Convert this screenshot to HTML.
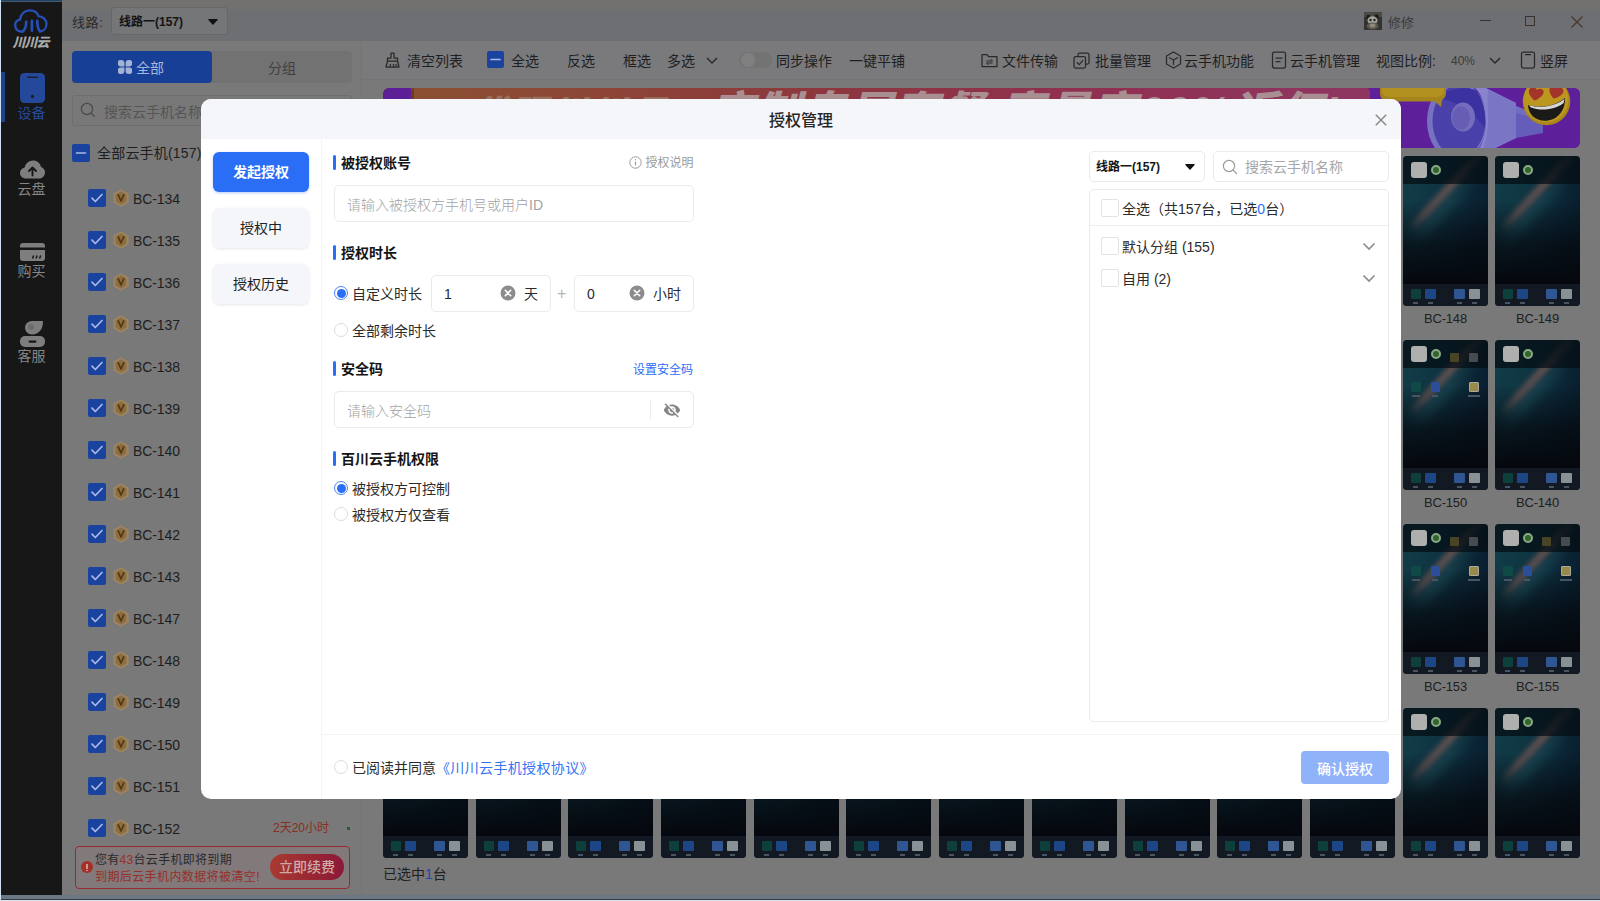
<!DOCTYPE html>
<html lang="zh-CN">
<head>
<meta charset="utf-8">
<title>授权管理</title>
<style>
*{box-sizing:border-box;margin:0;padding:0}
html,body{width:1600px;height:901px;overflow:hidden;background:#7f7f7f}
body{font-family:"Liberation Sans","Noto Sans CJK SC",sans-serif;font-size:14px;color:#222;position:relative}
.abs{position:absolute}
.t{position:absolute;white-space:nowrap;line-height:20px}
/* ---------- frame ---------- */
#frame-top{left:0;top:0;width:1600px;height:2px;background:#3f5b73}
#frame-top2{left:0;top:0;width:1600px;height:1px;background:#24425c}
#frame-left{left:0;top:0;width:1px;height:901px;background:#cfe0f0}
#frame-bot{left:0;top:900px;width:1600px;height:1px;background:#dde2e9}
#frame-bot2{left:1px;top:895px;width:1599px;height:5px;background:#6b7883;border-bottom:1px solid #2f3b48}
/* ---------- sidebar ---------- */
#side{left:1px;top:0;width:61px;height:898px;background:#171717}
#side .lab{position:absolute;left:0;width:61px;text-align:center;font-size:14px;line-height:18px;color:#878787}
/* ---------- topbar ---------- */
#topbar{z-index:2;left:62px;top:0;width:1538px;height:41px;background:linear-gradient(180deg,#73716f 0,#73716f 8px,#6d6f73 11px,#6d6f73 100%)}
/* ---------- left panel ---------- */
#lp{left:62px;top:40px;width:299px;height:858px;background:#797979}
#lp-div{left:361px;top:40px;width:1px;height:858px;background:#737373}
/* ---------- main ---------- */
#main{left:362px;top:40px;width:1238px;height:858px;background:#797979}
#toolbar{left:362px;top:40px;width:1238px;height:40px;background:#7a7a7c;border-bottom:1px solid #747474}
/* ---------- modal ---------- */
#modal{left:201px;top:99px;width:1200px;height:700px;background:#fff;border-radius:10px;overflow:hidden}
#mhead{left:0;top:0;width:1200px;height:40px;background:#f5f6fa}

/* topbar items */
#sel1{left:49px;top:7px;width:117px;height:28px;background:#757678;border:1px solid #66676a;border-radius:3px}
.cb{position:absolute;width:18px;height:18px;border-radius:2px;background:#1a43a0}
.cb svg{position:absolute;left:0;top:0}
.li{position:absolute;left:0;width:299px;height:42px}
.li .cb{left:26px;top:12px}
.li .v{position:absolute;left:50.500px;top:12px}
.li .n{position:absolute;left:71px;top:12px;font-size:14px;line-height:20px;color:#1e1e1e;letter-spacing:-.1px}

#toolbar .t{top:11px;font-size:14px;color:#1f1f1f}
.ph{position:absolute;width:85px;height:150px;border-radius:4px;overflow:hidden;background:
 linear-gradient(180deg,rgba(4,7,12,0) 0%,rgba(4,7,12,0) 30%,rgba(4,7,12,.7) 60%,#05080e 84%),
 linear-gradient(100deg,#123d49 0%,#0e3341 40%,#0a2232 75%,#081a28 100%)}
.ph i{position:absolute;display:block}
.ph .st{left:-10px;top:32px;width:104px;height:8px;background:linear-gradient(90deg,rgba(120,82,78,0),rgba(120,82,78,.6) 22%,rgba(130,92,86,.7) 60%,rgba(120,82,78,.2));transform:rotate(-47deg);filter:blur(2.500px)}
.ph .s2{left:-8px;top:42px;width:100px;height:14px;background:linear-gradient(90deg,rgba(40,90,100,0),rgba(40,90,100,.35) 30%,rgba(40,90,100,.35) 60%,rgba(40,90,100,0));transform:rotate(-47deg);filter:blur(4px)}
.ph .tb{left:0;top:0;width:85px;height:28px;background:rgba(5,12,18,.72)}
.ph .ck{left:8px;top:6px;width:16px;height:16px;border-radius:3px;background:#afafaf}
.ph .gr{left:28px;top:9px;width:10px;height:10px;border-radius:5px;background:#32652b;border:2px solid #8aa986}
.ph .dk{left:0;top:128px;width:85px;height:22px;background:#131923}
.ph .a{top:133px;width:10px;height:10px;border-radius:1px}
.ph .d{top:146px;width:5px;height:1.500px;background:#4a5562}
.pl{position:absolute;width:85px;text-align:center;font-size:13px;line-height:18px;color:#202020;letter-spacing:-.2px}

/* modal content (coords relative to modal: page x-201, y-99) */
#modal .t{color:#2b2b2b}
.nav{position:absolute;left:12px;width:96px;height:40px;border-radius:6px;background:#f5f6fa;box-shadow:0 1px 3px rgba(0,0,0,.10);text-align:center;font-size:14px;line-height:40px;color:#222}
.nav.on{background:#2b6ef6;color:#fff;font-weight:700;box-shadow:0 1px 3px rgba(43,110,246,.35)}
.sec{position:absolute;left:132px;height:20px}
.sec:before{content:"";position:absolute;left:0;top:2px;width:3px;height:15px;border-radius:1.500px;background:#2b6ef6}
.sec span{position:absolute;left:8px;top:0;white-space:nowrap;font-size:14px;line-height:20px;font-weight:700;color:#141414}
.inp{position:absolute;border:1px solid #e9eaed;border-radius:5px;background:#fff}
.ph13{position:absolute;white-space:nowrap;font-size:14px;line-height:20px;color:#a2a2a2;font-weight:300;margin-top:1px}
.rd{position:absolute;width:14px;height:14px;border-radius:7px;border:1px solid #dcdde1;background:#fff}
.rd.on{border:1px solid #4c83f7}
.rd.on:after{content:"";position:absolute;left:1.500px;top:1.500px;width:9px;height:9px;border-radius:4.500px;background:#2b6ef6}
.mcb{position:absolute;width:18px;height:18px;border:1px solid #e2e3e7;border-radius:2px;background:#fff}
</style>
</head>
<body>
<div class="abs" id="side">
<div class="abs" style="left:0;top:72px;width:4px;height:50px;background:#1f4288"></div>
<svg class="abs" style="left:12px;top:7px" width="37" height="27" viewBox="0 0 42 30" fill="none" stroke="#2450b8" stroke-width="2.6" stroke-linecap="round">
<path d="M10.5 27.5H8.5C4 27 2.5 23.5 2.5 20.5c0-3.5 2.5-6 5.5-6.500C8.500 8 13 3.500 19 3.500c4.500 0 8.500 2.500 10 6.500 5 .5 9 4 9 9 0 4.500-3 8-7.500 8.500"/>
<path d="M15 16.500c0 5-1 8.500-4 11M21.500 15.500v11M27.500 15.500c0 4 .5 8.500 3 11.500" stroke-width="3"/>
</svg>
<div class="t" style="left:-1px;top:35px;width:61px;text-align:center;font-size:13px;line-height:16px;font-weight:900;font-style:italic;color:#a9a9a9;letter-spacing:-1px">川川云</div>
<svg class="abs" style="left:19px;top:73px" width="25" height="30" viewBox="0 0 25 30"><rect x="0" y="0" width="25" height="30" rx="4.500" fill="#24489a"/><rect x="7" y="3.500" width="11" height="1.600" rx=".8" fill="#17202f"/><circle cx="12.500" cy="23.500" r="1.700" fill="#17202f"/></svg>
<div class="lab" style="top:104px;color:#264a9c">设备</div>
<svg class="abs" style="left:19px;top:160px" width="25" height="19" viewBox="0 0 25 19"><path d="M6 18.500C2.500 18.500 0 16 0 13c0-2.700 2-5 4.700-5.400C5.500 3.500 9 .5 13 .5c4 0 7.200 2.700 8 6.400 2.300.6 4 2.700 4 5.300 0 3.500-2.600 6.300-6 6.300z" fill="#7e7e7e"/><path d="M12.500 15.500V8M9 11l3.500-3.500L16 11" stroke="#171717" stroke-width="1.900" fill="none" stroke-linecap="round" stroke-linejoin="round"/></svg>
<div class="lab" style="top:180px">云盘</div>
<svg class="abs" style="left:19px;top:243px" width="25" height="18" viewBox="0 0 25 18"><path d="M3 0h19a3 3 0 0 1 3 3v1.500H0V3a3 3 0 0 1 3-3z" fill="#7e7e7e"/><path d="M0 7h25v8a3 3 0 0 1-3 3H3a3 3 0 0 1-3-3z" fill="#7e7e7e"/><path d="M12.500 15.500l1.200-3M16 15.500l1.200-3M19.500 15.500l1.200-3" stroke="#171717" stroke-width="1.500"/></svg>
<div class="lab" style="top:262px">购买</div>
<svg class="abs" style="left:19px;top:321px" width="25" height="26" viewBox="0 0 25 26"><path d="M12 0h10.500c0 0 .5 0 .5 .5C23 8 19 13.500 12 13.500 8 13.500 5 10.500 5 6.800 5 3 8 0 12 0z" fill="#7e7e7e"/><circle cx="11" cy="6" r="3" fill="#6c6c6c"/><path d="M5 15h15a5 5 0 0 1 5 5v1a5 5 0 0 1-5 5H5a5 5 0 0 1-5-5v-1a5 5 0 0 1 5-5z" fill="#7e7e7e"/><rect x="8.500" y="19.500" width="8" height="2.200" rx="1.100" fill="#171717"/></svg>
<div class="lab" style="top:347px">客服</div>
</div>
<div class="abs" id="topbar">
<div class="t" style="left:10px;top:12px;font-size:13px;letter-spacing:.6px;color:#2a2a2a;margin-top:1px">线路:</div>
<div class="abs" id="sel1"><div class="t" style="left:7px;top:4px;font-size:12px;font-weight:700;color:#141414">线路一(157)</div>
<svg class="abs" style="left:96px;top:11px" width="10" height="6" viewBox="0 0 10 6"><path d="M.8 0h8.400a.6.600 0 0 1 .4 1L5.500 5.600a.7.700 0 0 1-1 0L.4 1a.6.600 0 0 1 .4-1z" fill="#111"/></svg></div>
<svg class="abs" style="left:1302px;top:12px" width="18" height="18" viewBox="0 0 18 18"><rect width="18" height="18" fill="#34332f"/><rect x="0" y="0" width="18" height="5" fill="#4a4a44"/><circle cx="4.500" cy="5" r="2.200" fill="#1c1c1a"/><circle cx="12.500" cy="4.500" r="2.200" fill="#1c1c1a"/><ellipse cx="8.500" cy="8.500" rx="5" ry="4.200" fill="#a3a39c"/><circle cx="6.500" cy="8" r="1.200" fill="#222"/><circle cx="10.500" cy="8" r="1.200" fill="#222"/><ellipse cx="8.500" cy="14" rx="6" ry="3.500" fill="#5a564c"/><ellipse cx="8.500" cy="13.500" rx="3" ry="2" fill="#8d897c"/></svg>
<div class="t" style="left:1326px;top:13px;font-size:13px;color:#3a3a3a">修修</div>
<div class="abs" style="left:1418px;top:20px;width:11px;height:1px;background:#333"></div>
<div class="abs" style="left:1463px;top:16px;width:10px;height:10px;border:1px solid #3b332b"></div>
<svg class="abs" style="left:1509px;top:15.500px" width="12" height="12" viewBox="0 0 12 12"><path d="M.5 .5l11 11M11.500 .5l-11 11" stroke="#4a3526" stroke-width="1.200"/></svg>
</div>
<div class="abs" id="lp">
<div class="abs" style="left:10px;top:11px;width:280px;height:32px;background:#727272;border-radius:4px"></div>
<div class="abs" style="left:10px;top:11px;width:140px;height:32px;background:#173f96;border-radius:4px"></div>
<svg class="abs" style="left:56px;top:20px" width="14" height="14" viewBox="0 0 14 14" fill="#a3b3d6"><path d="M2.800 0h.4A3.200 3.200 0 0 1 6.400 3.200V6.400H2.800A2.800 2.800 0 0 1 2.800 0z"/><path d="M11.200 0h-.4A3.200 3.200 0 0 0 7.600 3.200V6.400H11.200A2.800 2.800 0 0 0 11.200 0z"/><path d="M2.800 14h.4A3.200 3.200 0 0 0 6.400 10.800V7.600H2.800A2.800 2.800 0 0 0 2.800 14z"/><path d="M11.200 14h-.4A3.200 3.200 0 0 1 7.600 10.800V7.600H11.200A2.800 2.800 0 0 1 11.200 14z"/></svg>
<div class="t" style="left:74px;top:18px;font-size:14px;color:#a6b7da">全部</div>
<div class="t" style="left:206px;top:18px;font-size:14px;color:#404040">分组</div>
<div class="abs" style="left:10px;top:55px;width:280px;height:31px;background:#787878;border:1px solid #6e6e6e;border-radius:3px"></div>
<svg class="abs" style="left:18px;top:62px" width="16" height="16" viewBox="0 0 16 16" fill="none" stroke="#4a4a4a" stroke-width="1.300"><circle cx="7" cy="7" r="5.600"/><path d="M11.200 11.200l3.200 3.200" stroke-linecap="round"/></svg>
<div class="t" style="left:42px;top:62px;font-size:14px;color:#555">搜索云手机名称</div>
<div class="cb" style="left:10px;top:104px"><svg width="18" height="18" viewBox="0 0 18 18"><path d="M4.500 9h9" stroke="#a9bbe2" stroke-width="1.700" stroke-linecap="round"/></svg></div>
<div class="t" style="left:35px;top:103px;font-size:14px;color:#1e1e1e;letter-spacing:.2px">全部云手机(157)</div>
<div class="li" style="top:137px"><div class="cb"><svg width="18" height="18" viewBox="0 0 18 18"><path d="M4 9.200l3.300 3.300L14 5.500" stroke="#a9bbe2" stroke-width="1.700" fill="none" stroke-linecap="round" stroke-linejoin="round"/></svg></div><svg class="v" width="16" height="18" viewBox="0 0 16 18"><path d="M8 .3l7.600 4.300v8.800L8 17.700l-7.600-4.300V4.600z" fill="#9c8560"/><path d="M8 2.300l5.400 3.100v7.200L8 15.700l-5.400-3.100V5.400z" fill="#8c6e42"/><path d="M5.300 5.800l2.700 6.200 2.700-6.200" stroke="#54390f" stroke-width="1.700" fill="none" stroke-linecap="round" stroke-linejoin="round"/></svg><div class="n">BC-134</div></div>
<div class="li" style="top:179px"><div class="cb"><svg width="18" height="18" viewBox="0 0 18 18"><path d="M4 9.200l3.300 3.300L14 5.500" stroke="#a9bbe2" stroke-width="1.700" fill="none" stroke-linecap="round" stroke-linejoin="round"/></svg></div><svg class="v" width="16" height="18" viewBox="0 0 16 18"><path d="M8 .3l7.600 4.300v8.800L8 17.700l-7.600-4.300V4.600z" fill="#9c8560"/><path d="M8 2.300l5.400 3.100v7.200L8 15.700l-5.400-3.100V5.400z" fill="#8c6e42"/><path d="M5.300 5.800l2.700 6.200 2.700-6.200" stroke="#54390f" stroke-width="1.700" fill="none" stroke-linecap="round" stroke-linejoin="round"/></svg><div class="n">BC-135</div></div>
<div class="li" style="top:221px"><div class="cb"><svg width="18" height="18" viewBox="0 0 18 18"><path d="M4 9.200l3.300 3.300L14 5.500" stroke="#a9bbe2" stroke-width="1.700" fill="none" stroke-linecap="round" stroke-linejoin="round"/></svg></div><svg class="v" width="16" height="18" viewBox="0 0 16 18"><path d="M8 .3l7.600 4.300v8.800L8 17.700l-7.600-4.300V4.600z" fill="#9c8560"/><path d="M8 2.300l5.400 3.100v7.200L8 15.700l-5.400-3.100V5.400z" fill="#8c6e42"/><path d="M5.300 5.800l2.700 6.200 2.700-6.200" stroke="#54390f" stroke-width="1.700" fill="none" stroke-linecap="round" stroke-linejoin="round"/></svg><div class="n">BC-136</div></div>
<div class="li" style="top:263px"><div class="cb"><svg width="18" height="18" viewBox="0 0 18 18"><path d="M4 9.200l3.300 3.300L14 5.500" stroke="#a9bbe2" stroke-width="1.700" fill="none" stroke-linecap="round" stroke-linejoin="round"/></svg></div><svg class="v" width="16" height="18" viewBox="0 0 16 18"><path d="M8 .3l7.600 4.300v8.800L8 17.700l-7.600-4.300V4.600z" fill="#9c8560"/><path d="M8 2.300l5.400 3.100v7.200L8 15.700l-5.400-3.100V5.400z" fill="#8c6e42"/><path d="M5.300 5.800l2.700 6.200 2.700-6.200" stroke="#54390f" stroke-width="1.700" fill="none" stroke-linecap="round" stroke-linejoin="round"/></svg><div class="n">BC-137</div></div>
<div class="li" style="top:305px"><div class="cb"><svg width="18" height="18" viewBox="0 0 18 18"><path d="M4 9.200l3.300 3.300L14 5.500" stroke="#a9bbe2" stroke-width="1.700" fill="none" stroke-linecap="round" stroke-linejoin="round"/></svg></div><svg class="v" width="16" height="18" viewBox="0 0 16 18"><path d="M8 .3l7.600 4.300v8.800L8 17.700l-7.600-4.300V4.600z" fill="#9c8560"/><path d="M8 2.300l5.400 3.100v7.200L8 15.700l-5.400-3.100V5.400z" fill="#8c6e42"/><path d="M5.300 5.800l2.700 6.200 2.700-6.200" stroke="#54390f" stroke-width="1.700" fill="none" stroke-linecap="round" stroke-linejoin="round"/></svg><div class="n">BC-138</div></div>
<div class="li" style="top:347px"><div class="cb"><svg width="18" height="18" viewBox="0 0 18 18"><path d="M4 9.200l3.300 3.300L14 5.500" stroke="#a9bbe2" stroke-width="1.700" fill="none" stroke-linecap="round" stroke-linejoin="round"/></svg></div><svg class="v" width="16" height="18" viewBox="0 0 16 18"><path d="M8 .3l7.600 4.300v8.800L8 17.700l-7.600-4.300V4.600z" fill="#9c8560"/><path d="M8 2.300l5.400 3.100v7.200L8 15.700l-5.400-3.100V5.400z" fill="#8c6e42"/><path d="M5.300 5.800l2.700 6.200 2.700-6.200" stroke="#54390f" stroke-width="1.700" fill="none" stroke-linecap="round" stroke-linejoin="round"/></svg><div class="n">BC-139</div></div>
<div class="li" style="top:389px"><div class="cb"><svg width="18" height="18" viewBox="0 0 18 18"><path d="M4 9.200l3.300 3.300L14 5.500" stroke="#a9bbe2" stroke-width="1.700" fill="none" stroke-linecap="round" stroke-linejoin="round"/></svg></div><svg class="v" width="16" height="18" viewBox="0 0 16 18"><path d="M8 .3l7.600 4.300v8.800L8 17.700l-7.600-4.300V4.600z" fill="#9c8560"/><path d="M8 2.300l5.400 3.100v7.200L8 15.700l-5.400-3.100V5.400z" fill="#8c6e42"/><path d="M5.300 5.800l2.700 6.200 2.700-6.200" stroke="#54390f" stroke-width="1.700" fill="none" stroke-linecap="round" stroke-linejoin="round"/></svg><div class="n">BC-140</div></div>
<div class="li" style="top:431px"><div class="cb"><svg width="18" height="18" viewBox="0 0 18 18"><path d="M4 9.200l3.300 3.300L14 5.500" stroke="#a9bbe2" stroke-width="1.700" fill="none" stroke-linecap="round" stroke-linejoin="round"/></svg></div><svg class="v" width="16" height="18" viewBox="0 0 16 18"><path d="M8 .3l7.600 4.300v8.800L8 17.700l-7.600-4.300V4.600z" fill="#9c8560"/><path d="M8 2.300l5.400 3.100v7.200L8 15.700l-5.400-3.100V5.400z" fill="#8c6e42"/><path d="M5.300 5.800l2.700 6.200 2.700-6.200" stroke="#54390f" stroke-width="1.700" fill="none" stroke-linecap="round" stroke-linejoin="round"/></svg><div class="n">BC-141</div></div>
<div class="li" style="top:473px"><div class="cb"><svg width="18" height="18" viewBox="0 0 18 18"><path d="M4 9.200l3.300 3.300L14 5.500" stroke="#a9bbe2" stroke-width="1.700" fill="none" stroke-linecap="round" stroke-linejoin="round"/></svg></div><svg class="v" width="16" height="18" viewBox="0 0 16 18"><path d="M8 .3l7.600 4.300v8.800L8 17.700l-7.600-4.300V4.600z" fill="#9c8560"/><path d="M8 2.300l5.400 3.100v7.200L8 15.700l-5.400-3.100V5.400z" fill="#8c6e42"/><path d="M5.300 5.800l2.700 6.200 2.700-6.200" stroke="#54390f" stroke-width="1.700" fill="none" stroke-linecap="round" stroke-linejoin="round"/></svg><div class="n">BC-142</div></div>
<div class="li" style="top:515px"><div class="cb"><svg width="18" height="18" viewBox="0 0 18 18"><path d="M4 9.200l3.300 3.300L14 5.500" stroke="#a9bbe2" stroke-width="1.700" fill="none" stroke-linecap="round" stroke-linejoin="round"/></svg></div><svg class="v" width="16" height="18" viewBox="0 0 16 18"><path d="M8 .3l7.600 4.300v8.800L8 17.700l-7.600-4.300V4.600z" fill="#9c8560"/><path d="M8 2.300l5.400 3.100v7.200L8 15.700l-5.400-3.100V5.400z" fill="#8c6e42"/><path d="M5.300 5.800l2.700 6.200 2.700-6.200" stroke="#54390f" stroke-width="1.700" fill="none" stroke-linecap="round" stroke-linejoin="round"/></svg><div class="n">BC-143</div></div>
<div class="li" style="top:557px"><div class="cb"><svg width="18" height="18" viewBox="0 0 18 18"><path d="M4 9.200l3.300 3.300L14 5.500" stroke="#a9bbe2" stroke-width="1.700" fill="none" stroke-linecap="round" stroke-linejoin="round"/></svg></div><svg class="v" width="16" height="18" viewBox="0 0 16 18"><path d="M8 .3l7.600 4.300v8.800L8 17.700l-7.600-4.300V4.600z" fill="#9c8560"/><path d="M8 2.300l5.400 3.100v7.200L8 15.700l-5.400-3.100V5.400z" fill="#8c6e42"/><path d="M5.300 5.800l2.700 6.200 2.700-6.200" stroke="#54390f" stroke-width="1.700" fill="none" stroke-linecap="round" stroke-linejoin="round"/></svg><div class="n">BC-147</div></div>
<div class="li" style="top:599px"><div class="cb"><svg width="18" height="18" viewBox="0 0 18 18"><path d="M4 9.200l3.300 3.300L14 5.500" stroke="#a9bbe2" stroke-width="1.700" fill="none" stroke-linecap="round" stroke-linejoin="round"/></svg></div><svg class="v" width="16" height="18" viewBox="0 0 16 18"><path d="M8 .3l7.600 4.300v8.800L8 17.700l-7.600-4.300V4.600z" fill="#9c8560"/><path d="M8 2.300l5.400 3.100v7.200L8 15.700l-5.400-3.100V5.400z" fill="#8c6e42"/><path d="M5.300 5.800l2.700 6.200 2.700-6.200" stroke="#54390f" stroke-width="1.700" fill="none" stroke-linecap="round" stroke-linejoin="round"/></svg><div class="n">BC-148</div></div>
<div class="li" style="top:641px"><div class="cb"><svg width="18" height="18" viewBox="0 0 18 18"><path d="M4 9.200l3.300 3.300L14 5.500" stroke="#a9bbe2" stroke-width="1.700" fill="none" stroke-linecap="round" stroke-linejoin="round"/></svg></div><svg class="v" width="16" height="18" viewBox="0 0 16 18"><path d="M8 .3l7.600 4.300v8.800L8 17.700l-7.600-4.300V4.600z" fill="#9c8560"/><path d="M8 2.300l5.400 3.100v7.200L8 15.700l-5.400-3.100V5.400z" fill="#8c6e42"/><path d="M5.300 5.800l2.700 6.200 2.700-6.200" stroke="#54390f" stroke-width="1.700" fill="none" stroke-linecap="round" stroke-linejoin="round"/></svg><div class="n">BC-149</div></div>
<div class="li" style="top:683px"><div class="cb"><svg width="18" height="18" viewBox="0 0 18 18"><path d="M4 9.200l3.300 3.300L14 5.500" stroke="#a9bbe2" stroke-width="1.700" fill="none" stroke-linecap="round" stroke-linejoin="round"/></svg></div><svg class="v" width="16" height="18" viewBox="0 0 16 18"><path d="M8 .3l7.600 4.300v8.800L8 17.700l-7.600-4.300V4.600z" fill="#9c8560"/><path d="M8 2.300l5.400 3.100v7.200L8 15.700l-5.400-3.100V5.400z" fill="#8c6e42"/><path d="M5.300 5.800l2.700 6.200 2.700-6.200" stroke="#54390f" stroke-width="1.700" fill="none" stroke-linecap="round" stroke-linejoin="round"/></svg><div class="n">BC-150</div></div>
<div class="li" style="top:725px"><div class="cb"><svg width="18" height="18" viewBox="0 0 18 18"><path d="M4 9.200l3.300 3.300L14 5.500" stroke="#a9bbe2" stroke-width="1.700" fill="none" stroke-linecap="round" stroke-linejoin="round"/></svg></div><svg class="v" width="16" height="18" viewBox="0 0 16 18"><path d="M8 .3l7.600 4.300v8.800L8 17.700l-7.600-4.300V4.600z" fill="#9c8560"/><path d="M8 2.300l5.400 3.100v7.200L8 15.700l-5.400-3.100V5.400z" fill="#8c6e42"/><path d="M5.300 5.800l2.700 6.200 2.700-6.200" stroke="#54390f" stroke-width="1.700" fill="none" stroke-linecap="round" stroke-linejoin="round"/></svg><div class="n">BC-151</div></div>
<div class="li" style="top:767px"><div class="cb"><svg width="18" height="18" viewBox="0 0 18 18"><path d="M4 9.200l3.300 3.300L14 5.500" stroke="#a9bbe2" stroke-width="1.700" fill="none" stroke-linecap="round" stroke-linejoin="round"/></svg></div><svg class="v" width="16" height="18" viewBox="0 0 16 18"><path d="M8 .3l7.600 4.300v8.800L8 17.700l-7.600-4.300V4.600z" fill="#9c8560"/><path d="M8 2.300l5.400 3.100v7.200L8 15.700l-5.400-3.100V5.400z" fill="#8c6e42"/><path d="M5.300 5.800l2.700 6.200 2.700-6.200" stroke="#54390f" stroke-width="1.700" fill="none" stroke-linecap="round" stroke-linejoin="round"/></svg><div class="n">BC-152</div><div class="t" style="left:211px;top:11px;font-size:12px;color:#8a2f22">2天20小时</div><div class="abs" style="left:285px;top:20px;width:3px;height:3px;background:#2c5a30"></div></div>

<div class="abs" style="left:13px;top:806px;width:275px;height:43px;background:#82797a;border:1px solid #962c33;border-radius:4px"></div>
<div class="abs" style="left:19px;top:821px;width:12px;height:12px;border-radius:6px;background:#a3302a"></div>
<div class="abs" style="left:24px;top:824px;width:1.500px;height:4.500px;background:#cf9a8e"></div><div class="abs" style="left:24px;top:829.500px;width:1.500px;height:1.500px;background:#cf9a8e"></div>
<div class="t" style="left:33px;top:812px;font-size:12px;line-height:16px;letter-spacing:.3px;color:#2a2a2a">您有<span style="color:#98302a">43</span>台云手机即将到期</div>
<div class="t" style="left:33px;top:829px;font-size:12px;line-height:16px;letter-spacing:.4px;color:#98302a">到期后云手机内数据将被清空!</div>
<div class="abs" style="left:208px;top:814px;width:74px;height:26px;border-radius:13px;background:linear-gradient(90deg,#a83a30,#8c1838)"></div>
<div class="t" style="left:208px;top:817px;width:74px;text-align:center;font-size:14px;font-weight:500;color:#cfa9a6">立即续费</div>
</div>
<div class="abs" id="lp-div"></div>
<div class="abs" id="main"></div>
<div class="abs" id="toolbar">
<svg class="abs" style="left:23px;top:12px" width="15" height="16" viewBox="0 0 15 16" fill="none" stroke="#2a2a2a" stroke-width="1.250" stroke-linejoin="round"><path d="M6 1h3v5h3.500v3h-10V6H6z"/><path d="M2.500 9L1 15h13l-1.500-6M5 15l.5-3M8.500 15v-3M11.500 15l-.5-3"/></svg>
<div class="t" style="left:45px">清空列表</div>
<div class="cb" style="left:125px;top:11px;width:17px;height:17px"><svg width="17" height="17" viewBox="0 0 17 17"><path d="M4 8.500h9" stroke="#a9bbe2" stroke-width="1.700" stroke-linecap="round"/></svg></div>
<div class="t" style="left:149px">全选</div>
<div class="t" style="left:205px">反选</div>
<div class="t" style="left:261px">框选</div>
<div class="t" style="left:305px">多选</div>
<svg class="abs" style="left:344px;top:17px" width="12" height="8" viewBox="0 0 12 8"><path d="M1 1l5 5 5-5" stroke="#2a2a2a" stroke-width="1.500" fill="none"/></svg>
<div class="abs" style="left:377px;top:12px;width:33px;height:16px;border-radius:8px;background:#737373"></div>
<div class="abs" style="left:379px;top:13px;width:14px;height:14px;border-radius:7px;background:#808080"></div>
<div class="t" style="left:414px">同步操作</div>
<div class="t" style="left:487px">一键平铺</div>
<svg class="abs" style="left:619px;top:12px" width="17" height="16" viewBox="0 0 17 16" fill="none" stroke="#2a2a2a" stroke-width="1.250" stroke-linejoin="round"><path d="M1 2.500h5l1.500 2H16v10H1z"/><path d="M5.500 9h6l-2-2M11.500 11h-6l2 2" stroke-width="1"/></svg>
<div class="t" style="left:640px">文件传输</div>
<svg class="abs" style="left:711px;top:12px" width="17" height="17" viewBox="0 0 17 17" fill="none" stroke="#2a2a2a" stroke-width="1.250" stroke-linejoin="round"><path d="M5 4V2.500A1.500 1.500 0 0 1 6.500 1h8A1.500 1.500 0 0 1 16 2.500v8a1.500 1.500 0 0 1-1.500 1.500H13"/><rect x="1" y="4.500" width="11.500" height="11.500" rx="1.500"/><path d="M3.800 10.200l2.400 2.400 4-4.400"/></svg>
<div class="t" style="left:733px">批量管理</div>
<svg class="abs" style="left:803px;top:11px" width="17" height="18" viewBox="0 0 17 18" fill="none" stroke="#2a2a2a" stroke-width="1.250" stroke-linejoin="round"><path d="M8.500 1l7 4v8l-7 4-7-4V5z"/><path d="M4 6.500L8.500 9 13 6.500M8.500 9v5"/></svg>
<div class="t" style="left:822px">云手机功能</div>
<svg class="abs" style="left:909px;top:11px" width="16" height="18" viewBox="0 0 16 18" fill="none" stroke="#2a2a2a" stroke-width="1.250" stroke-linejoin="round"><rect x="1.500" y="1" width="13" height="16" rx="2"/><path d="M4.500 7h7M4.500 10.500h5"/></svg>
<div class="t" style="left:928px">云手机管理</div>
<div class="t" style="left:1014px">视图比例:</div>
<div class="t" style="left:1089px;font-size:12px;color:#3a3a3a">40%</div>
<svg class="abs" style="left:1127px;top:17px" width="12" height="8" viewBox="0 0 12 8"><path d="M1 1l5 5 5-5" stroke="#2a2a2a" stroke-width="1.500" fill="none"/></svg>
<svg class="abs" style="left:1158px;top:11px" width="16" height="18" viewBox="0 0 16 18" fill="none" stroke="#2a2a2a" stroke-width="1.250"><rect x="1.500" y="1" width="13" height="16" rx="2"/><path d="M5.500 3.500h5" stroke-linecap="round"/></svg>
<div class="t" style="left:1178px">竖屏</div>
</div>
<div class="abs" id="banner" style="left:383px;top:88px;width:1197px;height:60px;border-radius:6px;overflow:hidden;background:linear-gradient(90deg,#8b5232 0%,#8c4536 18%,#8d363f 38%,#8f3050 58%,#8e3560 80%,#8b3a68 100%)">
<div class="abs" style="left:0;top:0;width:28px;height:60px;background:#5c1f96"></div>
<div class="abs" style="left:28px;top:0;width:3px;height:60px;background:#6e3d1e;border-radius:4px 0 0 4px"></div>
<div class="t" style="left:88px;top:4px;font-size:36px;line-height:44px;font-weight:900;font-style:italic;color:#98725f;letter-spacing:4px">代理川川云</div>
<div class="t" style="left:327px;top:-1px;font-size:44px;line-height:52px;font-weight:900;font-style:italic;color:#a98f92;letter-spacing:2px">定制专属套餐 享最高60%返佣!</div>
<svg class="abs" style="left:984px;top:0" width="213" height="60" viewBox="1367 88 213 60">
<path d="M1370 88h210v60h-210z" fill="#5e209a"/>
<path d="M1367 88a4 4 0 0 1 3 4v52a4 4 0 0 1-3 4h4v-60z" fill="#5e209a"/>
<ellipse cx="1457" cy="121" rx="30" ry="40" fill="#7771c2"/>
<ellipse cx="1459" cy="121" rx="26.500" ry="36" fill="#4a40aa"/>
<path d="M1438 98c8-9 24-12 38-8 7 9 10 22 9 38-9-12-24-26-47-30z" fill="#3c31a0"/>
<path d="M1468 84c11 3 18 18 18 37s-7 33-17 36l10-1 37-18v-35l-30-15z" fill="#8884cd"/>
<path d="M1488 90l28 13v35l-36 17c5-9 8-21 8-34s-1-22 0-31z" fill="#7a75c5"/>
<path d="M1516 106l27 11v16l-27 5z" fill="#645db9"/>
<path d="M1516 106l27 11v4l-27-8z" fill="#726cc2"/>
<ellipse cx="1463" cy="117" rx="12" ry="14.500" fill="#746dbd"/>
<ellipse cx="1461" cy="118" rx="9" ry="11.500" fill="#655eb4"/>
<path d="M1388 78h50a8 8 0 0 1 8 8v7a8 8 0 0 1-4 7l-1 7-6-5.500h-47a8 8 0 0 1-8-8v-7.500a8 8 0 0 1 8-8z" fill="#a4841c"/>
<path d="M1389 76h48a7 7 0 0 1 7 7v7a7 7 0 0 1-7 7h-48a7 7 0 0 1-7-7v-7a7 7 0 0 1 7-7z" fill="#b3911f"/>
<g transform="translate(0,-4)">
<circle cx="1546.500" cy="105.500" r="23.800" fill="#a88619"/>
<circle cx="1546" cy="104" r="22.500" fill="#bb9720"/>
<path d="M1528 109c6 1.500 13 2 19 1s13-3.500 18-8c0.500 11-6 21-17 22.500s-19.500-5-20-15.500z" fill="#1c1919"/>
<path d="M1529 109.300c6 1.600 12 2 18 1s12.500-3.300 17.500-7.300l-1 4.300c-4.500 3.300-10 5.200-16 6s-12 0-17-2z" fill="#d6d6d6"/>
<path d="M1530.500 92c2.500-1.500 5.500-.5 6.500 2 2-2 5.500-1.500 6.500 1s-2.500 7-9 9.500c-5-4-7.500-9.500-4-12.500z" fill="#a3342a"/>
<path d="M1551 90.500c2.500-1.500 5.500-.5 6.500 2 2.200-1.800 5.500-.8 6 2s-3.500 6.500-10 8c-4-4.500-5.500-9.500-2.500-12z" fill="#a3342a"/>
</g>
</svg>
</div>
<!--PH0-->
<div class="ph" style="left:383px;top:156px"><i class="s2"></i><i class="st"></i><i class="tb"></i><i class="ck"></i><i class="gr"></i><i class="dk"></i><i class="a" style="left:8px;background:#0d403c"></i><i class="a" style="left:22px;width:11px;background:#1d4686"></i><i class="a" style="left:51px;width:11px;background:#2f5592"></i><i class="a" style="left:66px;width:11px;background:#879196"></i><i class="d" style="left:10px"></i><i class="d" style="left:25px"></i><i class="d" style="left:54px"></i><i class="d" style="left:69px"></i></div>
<div class="ph" style="left:476px;top:156px"><i class="s2"></i><i class="st"></i><i class="tb"></i><i class="ck"></i><i class="gr"></i><i class="dk"></i><i class="a" style="left:8px;background:#0d403c"></i><i class="a" style="left:22px;width:11px;background:#1d4686"></i><i class="a" style="left:51px;width:11px;background:#2f5592"></i><i class="a" style="left:66px;width:11px;background:#879196"></i><i class="d" style="left:10px"></i><i class="d" style="left:25px"></i><i class="d" style="left:54px"></i><i class="d" style="left:69px"></i></div>
<div class="ph" style="left:568px;top:156px"><i class="s2"></i><i class="st"></i><i class="tb"></i><i class="ck"></i><i class="gr"></i><i class="dk"></i><i class="a" style="left:8px;background:#0d403c"></i><i class="a" style="left:22px;width:11px;background:#1d4686"></i><i class="a" style="left:51px;width:11px;background:#2f5592"></i><i class="a" style="left:66px;width:11px;background:#879196"></i><i class="d" style="left:10px"></i><i class="d" style="left:25px"></i><i class="d" style="left:54px"></i><i class="d" style="left:69px"></i></div>
<div class="ph" style="left:661px;top:156px"><i class="s2"></i><i class="st"></i><i class="tb"></i><i class="ck"></i><i class="gr"></i><i class="dk"></i><i class="a" style="left:8px;background:#0d403c"></i><i class="a" style="left:22px;width:11px;background:#1d4686"></i><i class="a" style="left:51px;width:11px;background:#2f5592"></i><i class="a" style="left:66px;width:11px;background:#879196"></i><i class="d" style="left:10px"></i><i class="d" style="left:25px"></i><i class="d" style="left:54px"></i><i class="d" style="left:69px"></i></div>
<div class="ph" style="left:754px;top:156px"><i class="s2"></i><i class="st"></i><i class="tb"></i><i class="ck"></i><i class="gr"></i><i class="dk"></i><i class="a" style="left:8px;background:#0d403c"></i><i class="a" style="left:22px;width:11px;background:#1d4686"></i><i class="a" style="left:51px;width:11px;background:#2f5592"></i><i class="a" style="left:66px;width:11px;background:#879196"></i><i class="d" style="left:10px"></i><i class="d" style="left:25px"></i><i class="d" style="left:54px"></i><i class="d" style="left:69px"></i></div>
<div class="ph" style="left:846px;top:156px"><i class="s2"></i><i class="st"></i><i class="tb"></i><i class="ck"></i><i class="gr"></i><i class="dk"></i><i class="a" style="left:8px;background:#0d403c"></i><i class="a" style="left:22px;width:11px;background:#1d4686"></i><i class="a" style="left:51px;width:11px;background:#2f5592"></i><i class="a" style="left:66px;width:11px;background:#879196"></i><i class="d" style="left:10px"></i><i class="d" style="left:25px"></i><i class="d" style="left:54px"></i><i class="d" style="left:69px"></i></div>
<div class="ph" style="left:939px;top:156px"><i class="s2"></i><i class="st"></i><i class="tb"></i><i class="ck"></i><i class="gr"></i><i class="dk"></i><i class="a" style="left:8px;background:#0d403c"></i><i class="a" style="left:22px;width:11px;background:#1d4686"></i><i class="a" style="left:51px;width:11px;background:#2f5592"></i><i class="a" style="left:66px;width:11px;background:#879196"></i><i class="d" style="left:10px"></i><i class="d" style="left:25px"></i><i class="d" style="left:54px"></i><i class="d" style="left:69px"></i></div>
<div class="ph" style="left:1032px;top:156px"><i class="s2"></i><i class="st"></i><i class="tb"></i><i class="ck"></i><i class="gr"></i><i class="dk"></i><i class="a" style="left:8px;background:#0d403c"></i><i class="a" style="left:22px;width:11px;background:#1d4686"></i><i class="a" style="left:51px;width:11px;background:#2f5592"></i><i class="a" style="left:66px;width:11px;background:#879196"></i><i class="d" style="left:10px"></i><i class="d" style="left:25px"></i><i class="d" style="left:54px"></i><i class="d" style="left:69px"></i></div>
<div class="ph" style="left:1125px;top:156px"><i class="s2"></i><i class="st"></i><i class="tb"></i><i class="ck"></i><i class="gr"></i><i class="dk"></i><i class="a" style="left:8px;background:#0d403c"></i><i class="a" style="left:22px;width:11px;background:#1d4686"></i><i class="a" style="left:51px;width:11px;background:#2f5592"></i><i class="a" style="left:66px;width:11px;background:#879196"></i><i class="d" style="left:10px"></i><i class="d" style="left:25px"></i><i class="d" style="left:54px"></i><i class="d" style="left:69px"></i></div>
<div class="ph" style="left:1217px;top:156px"><i class="s2"></i><i class="st"></i><i class="tb"></i><i class="ck"></i><i class="gr"></i><i class="dk"></i><i class="a" style="left:8px;background:#0d403c"></i><i class="a" style="left:22px;width:11px;background:#1d4686"></i><i class="a" style="left:51px;width:11px;background:#2f5592"></i><i class="a" style="left:66px;width:11px;background:#879196"></i><i class="d" style="left:10px"></i><i class="d" style="left:25px"></i><i class="d" style="left:54px"></i><i class="d" style="left:69px"></i></div>
<div class="ph" style="left:1310px;top:156px"><i class="s2"></i><i class="st"></i><i class="tb"></i><i class="ck"></i><i class="gr"></i><i class="dk"></i><i class="a" style="left:8px;background:#0d403c"></i><i class="a" style="left:22px;width:11px;background:#1d4686"></i><i class="a" style="left:51px;width:11px;background:#2f5592"></i><i class="a" style="left:66px;width:11px;background:#879196"></i><i class="d" style="left:10px"></i><i class="d" style="left:25px"></i><i class="d" style="left:54px"></i><i class="d" style="left:69px"></i></div>
<div class="ph" style="left:1403px;top:156px"><i class="s2"></i><i class="st"></i><i class="tb"></i><i class="ck"></i><i class="gr"></i><i class="dk"></i><i class="a" style="left:8px;background:#0d403c"></i><i class="a" style="left:22px;width:11px;background:#1d4686"></i><i class="a" style="left:51px;width:11px;background:#2f5592"></i><i class="a" style="left:66px;width:11px;background:#879196"></i><i class="d" style="left:10px"></i><i class="d" style="left:25px"></i><i class="d" style="left:54px"></i><i class="d" style="left:69px"></i></div>
<div class="pl" style="left:1403px;top:310px">BC-148</div>
<div class="ph" style="left:1495px;top:156px"><i class="s2"></i><i class="st"></i><i class="tb"></i><i class="ck"></i><i class="gr"></i><i class="dk"></i><i class="a" style="left:8px;background:#0d403c"></i><i class="a" style="left:22px;width:11px;background:#1d4686"></i><i class="a" style="left:51px;width:11px;background:#2f5592"></i><i class="a" style="left:66px;width:11px;background:#879196"></i><i class="d" style="left:10px"></i><i class="d" style="left:25px"></i><i class="d" style="left:54px"></i><i class="d" style="left:69px"></i></div>
<div class="pl" style="left:1495px;top:310px">BC-149</div>
<div class="ph" style="left:383px;top:340px"><i class="s2"></i><i class="st"></i><i class="tb"></i><i class="ck"></i><i class="gr"></i><i class="dk"></i><i class="a" style="left:8px;background:#0d403c"></i><i class="a" style="left:22px;width:11px;background:#1d4686"></i><i class="a" style="left:51px;width:11px;background:#2f5592"></i><i class="a" style="left:66px;width:11px;background:#879196"></i><i class="d" style="left:10px"></i><i class="d" style="left:25px"></i><i class="d" style="left:54px"></i><i class="d" style="left:69px"></i></div>
<div class="ph" style="left:476px;top:340px"><i class="s2"></i><i class="st"></i><i class="tb"></i><i class="ck"></i><i class="gr"></i><i class="dk"></i><i class="a" style="left:8px;background:#0d403c"></i><i class="a" style="left:22px;width:11px;background:#1d4686"></i><i class="a" style="left:51px;width:11px;background:#2f5592"></i><i class="a" style="left:66px;width:11px;background:#879196"></i><i class="d" style="left:10px"></i><i class="d" style="left:25px"></i><i class="d" style="left:54px"></i><i class="d" style="left:69px"></i></div>
<div class="ph" style="left:568px;top:340px"><i class="s2"></i><i class="st"></i><i class="tb"></i><i class="ck"></i><i class="gr"></i><i class="dk"></i><i class="a" style="left:8px;background:#0d403c"></i><i class="a" style="left:22px;width:11px;background:#1d4686"></i><i class="a" style="left:51px;width:11px;background:#2f5592"></i><i class="a" style="left:66px;width:11px;background:#879196"></i><i class="d" style="left:10px"></i><i class="d" style="left:25px"></i><i class="d" style="left:54px"></i><i class="d" style="left:69px"></i></div>
<div class="ph" style="left:661px;top:340px"><i class="s2"></i><i class="st"></i><i class="tb"></i><i class="ck"></i><i class="gr"></i><i class="dk"></i><i class="a" style="left:8px;background:#0d403c"></i><i class="a" style="left:22px;width:11px;background:#1d4686"></i><i class="a" style="left:51px;width:11px;background:#2f5592"></i><i class="a" style="left:66px;width:11px;background:#879196"></i><i class="d" style="left:10px"></i><i class="d" style="left:25px"></i><i class="d" style="left:54px"></i><i class="d" style="left:69px"></i></div>
<div class="ph" style="left:754px;top:340px"><i class="s2"></i><i class="st"></i><i class="tb"></i><i class="ck"></i><i class="gr"></i><i class="dk"></i><i class="a" style="left:8px;background:#0d403c"></i><i class="a" style="left:22px;width:11px;background:#1d4686"></i><i class="a" style="left:51px;width:11px;background:#2f5592"></i><i class="a" style="left:66px;width:11px;background:#879196"></i><i class="d" style="left:10px"></i><i class="d" style="left:25px"></i><i class="d" style="left:54px"></i><i class="d" style="left:69px"></i></div>
<div class="ph" style="left:846px;top:340px"><i class="s2"></i><i class="st"></i><i class="tb"></i><i class="ck"></i><i class="gr"></i><i class="dk"></i><i class="a" style="left:8px;background:#0d403c"></i><i class="a" style="left:22px;width:11px;background:#1d4686"></i><i class="a" style="left:51px;width:11px;background:#2f5592"></i><i class="a" style="left:66px;width:11px;background:#879196"></i><i class="d" style="left:10px"></i><i class="d" style="left:25px"></i><i class="d" style="left:54px"></i><i class="d" style="left:69px"></i></div>
<div class="ph" style="left:939px;top:340px"><i class="s2"></i><i class="st"></i><i class="tb"></i><i class="ck"></i><i class="gr"></i><i class="dk"></i><i class="a" style="left:8px;background:#0d403c"></i><i class="a" style="left:22px;width:11px;background:#1d4686"></i><i class="a" style="left:51px;width:11px;background:#2f5592"></i><i class="a" style="left:66px;width:11px;background:#879196"></i><i class="d" style="left:10px"></i><i class="d" style="left:25px"></i><i class="d" style="left:54px"></i><i class="d" style="left:69px"></i></div>
<div class="ph" style="left:1032px;top:340px"><i class="s2"></i><i class="st"></i><i class="tb"></i><i class="ck"></i><i class="gr"></i><i class="dk"></i><i class="a" style="left:8px;background:#0d403c"></i><i class="a" style="left:22px;width:11px;background:#1d4686"></i><i class="a" style="left:51px;width:11px;background:#2f5592"></i><i class="a" style="left:66px;width:11px;background:#879196"></i><i class="d" style="left:10px"></i><i class="d" style="left:25px"></i><i class="d" style="left:54px"></i><i class="d" style="left:69px"></i></div>
<div class="ph" style="left:1125px;top:340px"><i class="s2"></i><i class="st"></i><i class="tb"></i><i class="ck"></i><i class="gr"></i><i class="dk"></i><i class="a" style="left:8px;background:#0d403c"></i><i class="a" style="left:22px;width:11px;background:#1d4686"></i><i class="a" style="left:51px;width:11px;background:#2f5592"></i><i class="a" style="left:66px;width:11px;background:#879196"></i><i class="d" style="left:10px"></i><i class="d" style="left:25px"></i><i class="d" style="left:54px"></i><i class="d" style="left:69px"></i></div>
<div class="ph" style="left:1217px;top:340px"><i class="s2"></i><i class="st"></i><i class="tb"></i><i class="ck"></i><i class="gr"></i><i class="dk"></i><i class="a" style="left:8px;background:#0d403c"></i><i class="a" style="left:22px;width:11px;background:#1d4686"></i><i class="a" style="left:51px;width:11px;background:#2f5592"></i><i class="a" style="left:66px;width:11px;background:#879196"></i><i class="d" style="left:10px"></i><i class="d" style="left:25px"></i><i class="d" style="left:54px"></i><i class="d" style="left:69px"></i></div>
<div class="ph" style="left:1310px;top:340px"><i class="s2"></i><i class="st"></i><i class="tb"></i><i class="ck"></i><i class="gr"></i><i class="dk"></i><i class="a" style="left:8px;background:#0d403c"></i><i class="a" style="left:22px;width:11px;background:#1d4686"></i><i class="a" style="left:51px;width:11px;background:#2f5592"></i><i class="a" style="left:66px;width:11px;background:#879196"></i><i class="d" style="left:10px"></i><i class="d" style="left:25px"></i><i class="d" style="left:54px"></i><i class="d" style="left:69px"></i></div>
<div class="ph" style="left:1403px;top:340px"><i class="s2"></i><i class="st"></i><i class="tb"></i><i class="ck"></i><i class="gr"></i><i class="dk"></i><i class="a" style="left:8px;background:#0d403c"></i><i class="a" style="left:22px;width:11px;background:#1d4686"></i><i class="a" style="left:51px;width:11px;background:#2f5592"></i><i class="a" style="left:66px;width:11px;background:#879196"></i><i class="d" style="left:10px"></i><i class="d" style="left:25px"></i><i class="d" style="left:54px"></i><i class="d" style="left:69px"></i><i class="a" style="top:13px;left:47px;width:9px;height:9px;background:#4a4426"></i><i class="a" style="top:13px;left:66px;width:9px;height:9px;background:#474b50"></i><i class="a" style="top:42px;left:8px;background:#0f4a46"></i><i class="a" style="top:42px;left:28px;width:9px;background:#2a4f98"></i><i class="a" style="top:42px;left:66px;background:#9a8a4a;border:1.500px solid #a9a9a0"></i><i class="d" style="top:55px;left:9px;width:8px"></i><i class="d" style="top:55px;left:29px;width:6px"></i><i class="d" style="top:55px;left:65px;width:12px"></i></div>
<div class="pl" style="left:1403px;top:494px">BC-150</div>
<div class="ph" style="left:1495px;top:340px"><i class="s2"></i><i class="st"></i><i class="tb"></i><i class="ck"></i><i class="gr"></i><i class="dk"></i><i class="a" style="left:8px;background:#0d403c"></i><i class="a" style="left:22px;width:11px;background:#1d4686"></i><i class="a" style="left:51px;width:11px;background:#2f5592"></i><i class="a" style="left:66px;width:11px;background:#879196"></i><i class="d" style="left:10px"></i><i class="d" style="left:25px"></i><i class="d" style="left:54px"></i><i class="d" style="left:69px"></i></div>
<div class="pl" style="left:1495px;top:494px">BC-140</div>
<div class="ph" style="left:383px;top:524px"><i class="s2"></i><i class="st"></i><i class="tb"></i><i class="ck"></i><i class="gr"></i><i class="dk"></i><i class="a" style="left:8px;background:#0d403c"></i><i class="a" style="left:22px;width:11px;background:#1d4686"></i><i class="a" style="left:51px;width:11px;background:#2f5592"></i><i class="a" style="left:66px;width:11px;background:#879196"></i><i class="d" style="left:10px"></i><i class="d" style="left:25px"></i><i class="d" style="left:54px"></i><i class="d" style="left:69px"></i></div>
<div class="ph" style="left:476px;top:524px"><i class="s2"></i><i class="st"></i><i class="tb"></i><i class="ck"></i><i class="gr"></i><i class="dk"></i><i class="a" style="left:8px;background:#0d403c"></i><i class="a" style="left:22px;width:11px;background:#1d4686"></i><i class="a" style="left:51px;width:11px;background:#2f5592"></i><i class="a" style="left:66px;width:11px;background:#879196"></i><i class="d" style="left:10px"></i><i class="d" style="left:25px"></i><i class="d" style="left:54px"></i><i class="d" style="left:69px"></i></div>
<div class="ph" style="left:568px;top:524px"><i class="s2"></i><i class="st"></i><i class="tb"></i><i class="ck"></i><i class="gr"></i><i class="dk"></i><i class="a" style="left:8px;background:#0d403c"></i><i class="a" style="left:22px;width:11px;background:#1d4686"></i><i class="a" style="left:51px;width:11px;background:#2f5592"></i><i class="a" style="left:66px;width:11px;background:#879196"></i><i class="d" style="left:10px"></i><i class="d" style="left:25px"></i><i class="d" style="left:54px"></i><i class="d" style="left:69px"></i></div>
<div class="ph" style="left:661px;top:524px"><i class="s2"></i><i class="st"></i><i class="tb"></i><i class="ck"></i><i class="gr"></i><i class="dk"></i><i class="a" style="left:8px;background:#0d403c"></i><i class="a" style="left:22px;width:11px;background:#1d4686"></i><i class="a" style="left:51px;width:11px;background:#2f5592"></i><i class="a" style="left:66px;width:11px;background:#879196"></i><i class="d" style="left:10px"></i><i class="d" style="left:25px"></i><i class="d" style="left:54px"></i><i class="d" style="left:69px"></i></div>
<div class="ph" style="left:754px;top:524px"><i class="s2"></i><i class="st"></i><i class="tb"></i><i class="ck"></i><i class="gr"></i><i class="dk"></i><i class="a" style="left:8px;background:#0d403c"></i><i class="a" style="left:22px;width:11px;background:#1d4686"></i><i class="a" style="left:51px;width:11px;background:#2f5592"></i><i class="a" style="left:66px;width:11px;background:#879196"></i><i class="d" style="left:10px"></i><i class="d" style="left:25px"></i><i class="d" style="left:54px"></i><i class="d" style="left:69px"></i></div>
<div class="ph" style="left:846px;top:524px"><i class="s2"></i><i class="st"></i><i class="tb"></i><i class="ck"></i><i class="gr"></i><i class="dk"></i><i class="a" style="left:8px;background:#0d403c"></i><i class="a" style="left:22px;width:11px;background:#1d4686"></i><i class="a" style="left:51px;width:11px;background:#2f5592"></i><i class="a" style="left:66px;width:11px;background:#879196"></i><i class="d" style="left:10px"></i><i class="d" style="left:25px"></i><i class="d" style="left:54px"></i><i class="d" style="left:69px"></i></div>
<div class="ph" style="left:939px;top:524px"><i class="s2"></i><i class="st"></i><i class="tb"></i><i class="ck"></i><i class="gr"></i><i class="dk"></i><i class="a" style="left:8px;background:#0d403c"></i><i class="a" style="left:22px;width:11px;background:#1d4686"></i><i class="a" style="left:51px;width:11px;background:#2f5592"></i><i class="a" style="left:66px;width:11px;background:#879196"></i><i class="d" style="left:10px"></i><i class="d" style="left:25px"></i><i class="d" style="left:54px"></i><i class="d" style="left:69px"></i></div>
<div class="ph" style="left:1032px;top:524px"><i class="s2"></i><i class="st"></i><i class="tb"></i><i class="ck"></i><i class="gr"></i><i class="dk"></i><i class="a" style="left:8px;background:#0d403c"></i><i class="a" style="left:22px;width:11px;background:#1d4686"></i><i class="a" style="left:51px;width:11px;background:#2f5592"></i><i class="a" style="left:66px;width:11px;background:#879196"></i><i class="d" style="left:10px"></i><i class="d" style="left:25px"></i><i class="d" style="left:54px"></i><i class="d" style="left:69px"></i></div>
<div class="ph" style="left:1125px;top:524px"><i class="s2"></i><i class="st"></i><i class="tb"></i><i class="ck"></i><i class="gr"></i><i class="dk"></i><i class="a" style="left:8px;background:#0d403c"></i><i class="a" style="left:22px;width:11px;background:#1d4686"></i><i class="a" style="left:51px;width:11px;background:#2f5592"></i><i class="a" style="left:66px;width:11px;background:#879196"></i><i class="d" style="left:10px"></i><i class="d" style="left:25px"></i><i class="d" style="left:54px"></i><i class="d" style="left:69px"></i></div>
<div class="ph" style="left:1217px;top:524px"><i class="s2"></i><i class="st"></i><i class="tb"></i><i class="ck"></i><i class="gr"></i><i class="dk"></i><i class="a" style="left:8px;background:#0d403c"></i><i class="a" style="left:22px;width:11px;background:#1d4686"></i><i class="a" style="left:51px;width:11px;background:#2f5592"></i><i class="a" style="left:66px;width:11px;background:#879196"></i><i class="d" style="left:10px"></i><i class="d" style="left:25px"></i><i class="d" style="left:54px"></i><i class="d" style="left:69px"></i></div>
<div class="ph" style="left:1310px;top:524px"><i class="s2"></i><i class="st"></i><i class="tb"></i><i class="ck"></i><i class="gr"></i><i class="dk"></i><i class="a" style="left:8px;background:#0d403c"></i><i class="a" style="left:22px;width:11px;background:#1d4686"></i><i class="a" style="left:51px;width:11px;background:#2f5592"></i><i class="a" style="left:66px;width:11px;background:#879196"></i><i class="d" style="left:10px"></i><i class="d" style="left:25px"></i><i class="d" style="left:54px"></i><i class="d" style="left:69px"></i></div>
<div class="ph" style="left:1403px;top:524px"><i class="s2"></i><i class="st"></i><i class="tb"></i><i class="ck"></i><i class="gr"></i><i class="dk"></i><i class="a" style="left:8px;background:#0d403c"></i><i class="a" style="left:22px;width:11px;background:#1d4686"></i><i class="a" style="left:51px;width:11px;background:#2f5592"></i><i class="a" style="left:66px;width:11px;background:#879196"></i><i class="d" style="left:10px"></i><i class="d" style="left:25px"></i><i class="d" style="left:54px"></i><i class="d" style="left:69px"></i><i class="a" style="top:13px;left:47px;width:9px;height:9px;background:#4a4426"></i><i class="a" style="top:13px;left:66px;width:9px;height:9px;background:#474b50"></i><i class="a" style="top:42px;left:8px;background:#0f4a46"></i><i class="a" style="top:42px;left:28px;width:9px;background:#2a4f98"></i><i class="a" style="top:42px;left:66px;background:#9a8a4a;border:1.500px solid #a9a9a0"></i><i class="d" style="top:55px;left:9px;width:8px"></i><i class="d" style="top:55px;left:29px;width:6px"></i><i class="d" style="top:55px;left:65px;width:12px"></i></div>
<div class="pl" style="left:1403px;top:678px">BC-153</div>
<div class="ph" style="left:1495px;top:524px"><i class="s2"></i><i class="st"></i><i class="tb"></i><i class="ck"></i><i class="gr"></i><i class="dk"></i><i class="a" style="left:8px;background:#0d403c"></i><i class="a" style="left:22px;width:11px;background:#1d4686"></i><i class="a" style="left:51px;width:11px;background:#2f5592"></i><i class="a" style="left:66px;width:11px;background:#879196"></i><i class="d" style="left:10px"></i><i class="d" style="left:25px"></i><i class="d" style="left:54px"></i><i class="d" style="left:69px"></i><i class="a" style="top:13px;left:47px;width:9px;height:9px;background:#4a4426"></i><i class="a" style="top:13px;left:66px;width:9px;height:9px;background:#474b50"></i><i class="a" style="top:42px;left:8px;background:#0f4a46"></i><i class="a" style="top:42px;left:28px;width:9px;background:#2a4f98"></i><i class="a" style="top:42px;left:66px;background:#9a8a4a;border:1.500px solid #a9a9a0"></i><i class="d" style="top:55px;left:9px;width:8px"></i><i class="d" style="top:55px;left:29px;width:6px"></i><i class="d" style="top:55px;left:65px;width:12px"></i></div>
<div class="pl" style="left:1495px;top:678px">BC-155</div>
<div class="ph" style="left:383px;top:708px"><i class="s2"></i><i class="st"></i><i class="tb"></i><i class="ck"></i><i class="gr"></i><i class="dk"></i><i class="a" style="left:8px;background:#0d403c"></i><i class="a" style="left:22px;width:11px;background:#1d4686"></i><i class="a" style="left:51px;width:11px;background:#2f5592"></i><i class="a" style="left:66px;width:11px;background:#879196"></i><i class="d" style="left:10px"></i><i class="d" style="left:25px"></i><i class="d" style="left:54px"></i><i class="d" style="left:69px"></i></div>
<div class="ph" style="left:476px;top:708px"><i class="s2"></i><i class="st"></i><i class="tb"></i><i class="ck"></i><i class="gr"></i><i class="dk"></i><i class="a" style="left:8px;background:#0d403c"></i><i class="a" style="left:22px;width:11px;background:#1d4686"></i><i class="a" style="left:51px;width:11px;background:#2f5592"></i><i class="a" style="left:66px;width:11px;background:#879196"></i><i class="d" style="left:10px"></i><i class="d" style="left:25px"></i><i class="d" style="left:54px"></i><i class="d" style="left:69px"></i></div>
<div class="ph" style="left:568px;top:708px"><i class="s2"></i><i class="st"></i><i class="tb"></i><i class="ck"></i><i class="gr"></i><i class="dk"></i><i class="a" style="left:8px;background:#0d403c"></i><i class="a" style="left:22px;width:11px;background:#1d4686"></i><i class="a" style="left:51px;width:11px;background:#2f5592"></i><i class="a" style="left:66px;width:11px;background:#879196"></i><i class="d" style="left:10px"></i><i class="d" style="left:25px"></i><i class="d" style="left:54px"></i><i class="d" style="left:69px"></i></div>
<div class="ph" style="left:661px;top:708px"><i class="s2"></i><i class="st"></i><i class="tb"></i><i class="ck"></i><i class="gr"></i><i class="dk"></i><i class="a" style="left:8px;background:#0d403c"></i><i class="a" style="left:22px;width:11px;background:#1d4686"></i><i class="a" style="left:51px;width:11px;background:#2f5592"></i><i class="a" style="left:66px;width:11px;background:#879196"></i><i class="d" style="left:10px"></i><i class="d" style="left:25px"></i><i class="d" style="left:54px"></i><i class="d" style="left:69px"></i></div>
<div class="ph" style="left:754px;top:708px"><i class="s2"></i><i class="st"></i><i class="tb"></i><i class="ck"></i><i class="gr"></i><i class="dk"></i><i class="a" style="left:8px;background:#0d403c"></i><i class="a" style="left:22px;width:11px;background:#1d4686"></i><i class="a" style="left:51px;width:11px;background:#2f5592"></i><i class="a" style="left:66px;width:11px;background:#879196"></i><i class="d" style="left:10px"></i><i class="d" style="left:25px"></i><i class="d" style="left:54px"></i><i class="d" style="left:69px"></i></div>
<div class="ph" style="left:846px;top:708px"><i class="s2"></i><i class="st"></i><i class="tb"></i><i class="ck"></i><i class="gr"></i><i class="dk"></i><i class="a" style="left:8px;background:#0d403c"></i><i class="a" style="left:22px;width:11px;background:#1d4686"></i><i class="a" style="left:51px;width:11px;background:#2f5592"></i><i class="a" style="left:66px;width:11px;background:#879196"></i><i class="d" style="left:10px"></i><i class="d" style="left:25px"></i><i class="d" style="left:54px"></i><i class="d" style="left:69px"></i></div>
<div class="ph" style="left:939px;top:708px"><i class="s2"></i><i class="st"></i><i class="tb"></i><i class="ck"></i><i class="gr"></i><i class="dk"></i><i class="a" style="left:8px;background:#0d403c"></i><i class="a" style="left:22px;width:11px;background:#1d4686"></i><i class="a" style="left:51px;width:11px;background:#2f5592"></i><i class="a" style="left:66px;width:11px;background:#879196"></i><i class="d" style="left:10px"></i><i class="d" style="left:25px"></i><i class="d" style="left:54px"></i><i class="d" style="left:69px"></i></div>
<div class="ph" style="left:1032px;top:708px"><i class="s2"></i><i class="st"></i><i class="tb"></i><i class="ck"></i><i class="gr"></i><i class="dk"></i><i class="a" style="left:8px;background:#0d403c"></i><i class="a" style="left:22px;width:11px;background:#1d4686"></i><i class="a" style="left:51px;width:11px;background:#2f5592"></i><i class="a" style="left:66px;width:11px;background:#879196"></i><i class="d" style="left:10px"></i><i class="d" style="left:25px"></i><i class="d" style="left:54px"></i><i class="d" style="left:69px"></i></div>
<div class="ph" style="left:1125px;top:708px"><i class="s2"></i><i class="st"></i><i class="tb"></i><i class="ck"></i><i class="gr"></i><i class="dk"></i><i class="a" style="left:8px;background:#0d403c"></i><i class="a" style="left:22px;width:11px;background:#1d4686"></i><i class="a" style="left:51px;width:11px;background:#2f5592"></i><i class="a" style="left:66px;width:11px;background:#879196"></i><i class="d" style="left:10px"></i><i class="d" style="left:25px"></i><i class="d" style="left:54px"></i><i class="d" style="left:69px"></i></div>
<div class="ph" style="left:1217px;top:708px"><i class="s2"></i><i class="st"></i><i class="tb"></i><i class="ck"></i><i class="gr"></i><i class="dk"></i><i class="a" style="left:8px;background:#0d403c"></i><i class="a" style="left:22px;width:11px;background:#1d4686"></i><i class="a" style="left:51px;width:11px;background:#2f5592"></i><i class="a" style="left:66px;width:11px;background:#879196"></i><i class="d" style="left:10px"></i><i class="d" style="left:25px"></i><i class="d" style="left:54px"></i><i class="d" style="left:69px"></i></div>
<div class="ph" style="left:1310px;top:708px"><i class="s2"></i><i class="st"></i><i class="tb"></i><i class="ck"></i><i class="gr"></i><i class="dk"></i><i class="a" style="left:8px;background:#0d403c"></i><i class="a" style="left:22px;width:11px;background:#1d4686"></i><i class="a" style="left:51px;width:11px;background:#2f5592"></i><i class="a" style="left:66px;width:11px;background:#879196"></i><i class="d" style="left:10px"></i><i class="d" style="left:25px"></i><i class="d" style="left:54px"></i><i class="d" style="left:69px"></i></div>
<div class="ph" style="left:1403px;top:708px"><i class="s2"></i><i class="st"></i><i class="tb"></i><i class="ck"></i><i class="gr"></i><i class="dk"></i><i class="a" style="left:8px;background:#0d403c"></i><i class="a" style="left:22px;width:11px;background:#1d4686"></i><i class="a" style="left:51px;width:11px;background:#2f5592"></i><i class="a" style="left:66px;width:11px;background:#879196"></i><i class="d" style="left:10px"></i><i class="d" style="left:25px"></i><i class="d" style="left:54px"></i><i class="d" style="left:69px"></i></div>
<div class="ph" style="left:1495px;top:708px"><i class="s2"></i><i class="st"></i><i class="tb"></i><i class="ck"></i><i class="gr"></i><i class="dk"></i><i class="a" style="left:8px;background:#0d403c"></i><i class="a" style="left:22px;width:11px;background:#1d4686"></i><i class="a" style="left:51px;width:11px;background:#2f5592"></i><i class="a" style="left:66px;width:11px;background:#879196"></i><i class="d" style="left:10px"></i><i class="d" style="left:25px"></i><i class="d" style="left:54px"></i><i class="d" style="left:69px"></i></div>
<!--PH1-->
<div class="t" style="left:383px;top:864px;font-size:14px;color:#1f1f1f">已选中<span style="color:#1c4aa6">1</span>台</div>

<div class="abs" id="modal">
<div class="abs" id="mhead"></div>
<div class="t" style="left:0;top:12px;width:1200px;text-align:center;font-size:16px;font-weight:500;color:#262626">授权管理</div>
<svg class="abs" style="left:1174px;top:15px" width="12" height="12" viewBox="0 0 12 12"><path d="M.8 .8l10.400 10.400M11.200 .8L.8 11.200" stroke="#8a8a8a" stroke-width="1.500"/></svg>
<div class="abs" style="left:120px;top:40px;width:1px;height:660px;background:#f4f4f6"></div>
<div class="nav on" style="top:53px">发起授权</div>
<div class="nav" style="top:109px">授权中</div>
<div class="nav" style="top:165px">授权历史</div>

<div class="sec" style="top:54px"><span>被授权账号</span></div>
<svg class="abs" style="left:428px;top:57px" width="13" height="13" viewBox="0 0 13 13" fill="none" stroke="#9a9a9a" stroke-width="1"><circle cx="6.500" cy="6.500" r="5.700"/><path d="M6.500 5.700v3.600" stroke-width="1.200"/><circle cx="6.500" cy="3.800" r=".7" fill="#9a9a9a" stroke="none"/></svg>
<div class="t" style="left:444.500px;top:54px;font-size:12px;color:#9a9a9a">授权说明</div>
<div class="inp" style="left:133px;top:86px;width:360px;height:37px"></div>
<div class="ph13" style="left:146px;top:95px">请输入被授权方手机号或用户ID</div>

<div class="sec" style="top:144px"><span>授权时长</span></div>
<div class="rd on" style="left:133px;top:187px"></div>
<div class="t" style="left:151px;top:185px;font-size:14px">自定义时长</div>
<div class="inp" style="left:230px;top:176px;width:120px;height:37px"></div>
<div class="t" style="left:243px;top:185px;font-size:14px">1</div>
<svg class="abs" style="left:299px;top:186px" width="16" height="16" viewBox="0 0 16 16"><circle cx="8" cy="8" r="7.500" fill="#8c8c8c"/><path d="M5.300 5.300l5.400 5.400M10.700 5.300l-5.400 5.400" stroke="#fff" stroke-width="1.600" stroke-linecap="round"/></svg>
<div class="t" style="left:323px;top:185px;font-size:14px">天</div>
<div class="t" style="left:356px;top:184.500px;font-size:16px;color:#b5b5b5;font-weight:300">+</div>
<div class="inp" style="left:373px;top:176px;width:120px;height:37px"></div>
<div class="t" style="left:386px;top:185px;font-size:14px">0</div>
<svg class="abs" style="left:428px;top:186px" width="16" height="16" viewBox="0 0 16 16"><circle cx="8" cy="8" r="7.500" fill="#8c8c8c"/><path d="M5.300 5.300l5.400 5.400M10.700 5.300l-5.400 5.400" stroke="#fff" stroke-width="1.600" stroke-linecap="round"/></svg>
<div class="t" style="left:452px;top:185px;font-size:14px">小时</div>
<div class="rd" style="left:133px;top:224px"></div>
<div class="t" style="left:151px;top:222px;font-size:14px">全部剩余时长</div>

<div class="sec" style="top:260px"><span>安全码</span></div>
<div class="t" style="left:432px;top:261px;font-size:12px;color:#2b6ef6">设置安全码</div>
<div class="inp" style="left:133px;top:292px;width:360px;height:37px"></div>
<div class="ph13" style="left:146px;top:301px">请输入安全码</div>
<div class="abs" style="left:449px;top:301px;width:1px;height:20px;background:#ececec"></div>
<svg class="abs" style="left:462px;top:302px" width="18" height="18" viewBox="0 0 24 24"><path fill="#858585" d="M12 7c2.760 0 5 2.240 5 5 0 .65-.13 1.260-.36 1.830l2.920 2.920c1.510-1.260 2.700-2.890 3.430-4.750-1.730-4.390-6-7.500-11-7.500-1.400 0-2.740.25-3.980.7l2.160 2.160C10.740 7.130 11.350 7 12 7zM2 4.270l2.280 2.280.46.46C3.080 8.300 1.780 10.020 1 12c1.730 4.390 6 7.500 11 7.500 1.550 0 3.030-.3 4.380-.84l.42.42L19.730 22 21 20.730 3.270 3 2 4.270zM7.530 9.800l1.550 1.550c-.05.21-.08.43-.08.65 0 1.660 1.340 3 3 3 .22 0 .44-.03.65-.08l1.550 1.550c-.67.33-1.410.53-2.200.53-2.760 0-5-2.240-5-5 0-.79.2-1.530.53-2.200zm4.310-.78l3.150 3.150.02-.16c0-1.660-1.340-3-3-3l-.17.01z"/></svg>

<div class="sec" style="top:350px"><span>百川云手机权限</span></div>
<div class="rd on" style="left:133px;top:382px"></div>
<div class="t" style="left:151px;top:380px;font-size:14px">被授权方可控制</div>
<div class="rd" style="left:133px;top:408px"></div>
<div class="t" style="left:151px;top:406px;font-size:14px">被授权方仅查看</div>

<div class="inp" style="left:888px;top:52px;width:116px;height:31px"></div>
<div class="t" style="left:895px;top:58px;font-size:12px;font-weight:700;color:#141414">线路一(157)</div>
<svg class="abs" style="left:984px;top:65px" width="10" height="6" viewBox="0 0 10 6"><path d="M.8 0h8.400a.6.600 0 0 1 .4 1L5.500 5.600a.7.700 0 0 1-1 0L.4 1a.6.600 0 0 1 .4-1z" fill="#111"/></svg>
<div class="inp" style="left:1012px;top:52px;width:176px;height:31px"></div>
<svg class="abs" style="left:1021px;top:60px" width="16" height="16" viewBox="0 0 16 16" fill="none" stroke="#9a9a9a" stroke-width="1.200"><circle cx="7" cy="7" r="5.600"/><path d="M11.200 11.200l3.300 3.300" stroke-linecap="round"/></svg>
<div class="t" style="left:1044px;top:58px;font-size:14px;color:#a6a6a6">搜索云手机名称</div>
<div class="inp" style="left:888px;top:90px;width:300px;height:533px"></div>
<div class="abs" style="left:889px;top:126px;width:298px;height:1px;background:#ededf0"></div>
<div class="mcb" style="left:900px;top:100px"></div>
<div class="t" style="left:921px;top:100px;font-size:14px">全选（共157台，已选<span style="color:#2b6ef6">0</span>台）</div>
<div class="mcb" style="left:900px;top:138px"></div>
<div class="t" style="left:921px;top:138px;font-size:14px">默认分组 (155)</div>
<svg class="abs" style="left:1161px;top:143px" width="14" height="9" viewBox="0 0 14 9"><path d="M1.500 1.500l5.500 5.500 5.500-5.500" stroke="#8c8c8c" stroke-width="1.700" fill="none"/></svg>
<div class="mcb" style="left:900px;top:170px"></div>
<div class="t" style="left:921px;top:170px;font-size:14px">自用 (2)</div>
<svg class="abs" style="left:1161px;top:175px" width="14" height="9" viewBox="0 0 14 9"><path d="M1.500 1.500l5.500 5.500 5.500-5.500" stroke="#8c8c8c" stroke-width="1.700" fill="none"/></svg>
<div class="abs" style="left:121px;top:635px;width:1079px;height:1px;background:#f2f3f5"></div>
<div class="rd" style="left:133px;top:661px"></div>
<div class="t" style="left:151px;top:659px;font-size:14px">已阅读并同意<span style="color:#3474f3;letter-spacing:.35px">《川川云手机授权协议》</span></div>
<div class="abs" style="left:1100px;top:652px;width:88px;height:33px;border-radius:4px;background:#8fb2f9"></div>
<div class="t" style="left:1100px;top:660px;width:88px;text-align:center;font-size:14px;font-weight:500;color:#fff">确认授权</div>

</div>
<div class="abs" id="frame-top"></div>
<div class="abs" id="frame-top2"></div>
<div class="abs" id="frame-left"></div>
<div class="abs" id="frame-bot2"></div>
<div class="abs" id="frame-bot"></div>
</body>
</html>
